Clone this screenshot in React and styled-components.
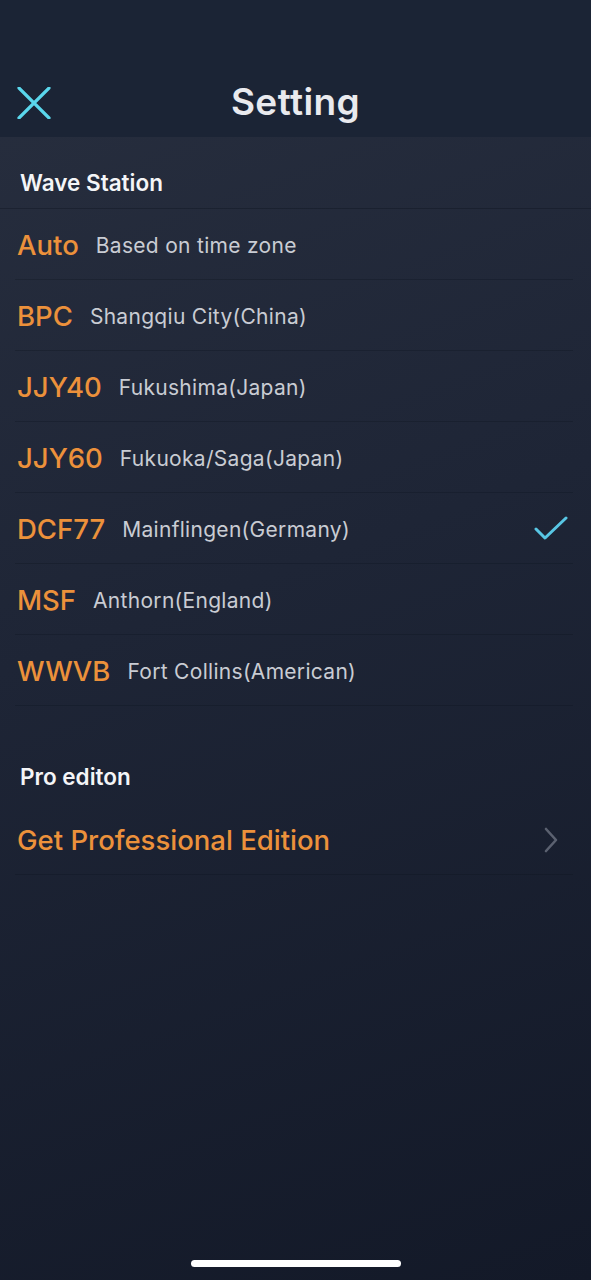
import React from 'react';
import styled, { createGlobalStyle } from 'styled-components';

const GlobalStyle = createGlobalStyle`
    html, body {
        margin: 0;
        padding: 0;
        background: #161c2b;
    }
    body {
        font-family: Inter, "Noto Sans", "Liberation Sans", sans-serif;
        -webkit-font-smoothing: antialiased;
    }
`;

const Screen = styled.div`
    width: 591px;
    height: 1280px;
    display: flex;
    flex-direction: column;
    overflow: hidden;
    background: linear-gradient(160deg, #282f3f 0%, #1e2536 45%, #131928 100%);
`;

const NavBar = styled.header`
    height: 137px;
    flex-shrink: 0;
    background: #1b2435;
    display: grid;
    grid-template-columns: 80px 1fr 80px;
    align-items: end;
    padding-bottom: 13px;
    box-sizing: border-box;
`;

const CloseButton = styled.button`
    background: none;
    border: 0;
    padding: 0 0 5px 17px;
    display: flex;
    cursor: pointer;
`;

const Title = styled.h1`
    margin: 0;
    text-align: center;
    font-size: 37px;
    font-weight: 600;
    color: #e9eaee;
    letter-spacing: 0.4px;
`;

const SectionTitle = styled.div`
    height: ${(p) => p.h}px;
    box-sizing: border-box;
    padding: ${(p) => p.pt}px 0 0 20px;
    font-size: 22.5px;
    font-weight: 600;
    color: #f4f5f7;
    border-bottom: 1px solid ${(p) => (p.line ? 'rgba(12, 18, 30, 0.35)' : 'transparent')};
`;

const List = styled.div`
    display: flex;
    flex-direction: column;
`;

const Row = styled.div`
    height: 71px;
    margin-left: 15px;
    margin-right: 18px;
    box-sizing: border-box;
    display: flex;
    align-items: center;
    gap: 17px;
    border-bottom: 1px solid rgba(12, 18, 30, 0.28);
    padding: 2px 0 0 2px;
`;

const Code = styled.span`
    font-size: 27.5px;
    font-weight: 500;
    color: #ec913b;
`;

const Place = styled.span`
    flex: 1;
    font-size: 21px;
    font-weight: 400;
    color: #c9ccd3;
    letter-spacing: 0.3px;
`;

const Trail = styled.span`
    display: flex;
    align-items: center;
    margin-right: ${(p) => p.mr}px;
`;

const HomeBar = styled.div`
    margin: auto auto 13px;
    width: 210px;
    height: 7px;
    border-radius: 4px;
    background: #ffffff;
`;

const stations = [
    { code: 'Auto', place: 'Based on time zone' },
    { code: 'BPC', place: 'Shangqiu City(China)' },
    { code: 'JJY40', place: 'Fukushima(Japan)' },
    { code: 'JJY60', place: 'Fukuoka/Saga(Japan)' },
    { code: 'DCF77', place: 'Mainflingen(Germany)', selected: true },
    { code: 'MSF', place: 'Anthorn(England)' },
    { code: 'WWVB', place: 'Fort Collins(American)' },
];

const CloseIcon = () => (
    <svg width="34" height="32" viewBox="0 0 34 32">
        <path d="M2 1 L32 31 M32 1 L2 31" stroke="#5ad7ec" strokeWidth="3.2" strokeLinecap="round" />
    </svg>
);

const CheckIcon = () => (
    <svg width="34" height="26" viewBox="0 0 34 26">
        <path d="M2 13 L11 22 L32 2" stroke="#58c6e4" strokeWidth="3" fill="none" strokeLinecap="round" strokeLinejoin="round" />
    </svg>
);

const ChevronIcon = () => (
    <svg width="16" height="26" viewBox="0 0 16 26">
        <path d="M3 2 L13 13 L3 24" stroke="#5b6170" strokeWidth="2.6" fill="none" strokeLinecap="round" strokeLinejoin="round" />
    </svg>
);

const App = () => {
    return (
        <Screen>
            <GlobalStyle />
            <NavBar>
                <CloseButton aria-label="close">
                    <CloseIcon />
                </CloseButton>
                <Title>Setting</Title>
                <div />
            </NavBar>
            <SectionTitle h={72} pt={32} line>
                Wave Station
            </SectionTitle>
            <List>
                {stations.map((s) => (
                    <Row key={s.code}>
                        <Code>{s.code}</Code>
                        <Place>{s.place}</Place>
                        {s.selected && (
                            <Trail mr={5}>
                                <CheckIcon />
                            </Trail>
                        )}
                    </Row>
                ))}
            </List>
            <SectionTitle h={98} pt={57}>
                Pro editon
            </SectionTitle>
            <List>
                <Row>
                    <Code>Get Professional Edition</Code>
                    <Place />
                    <Trail mr={14}>
                        <ChevronIcon />
                    </Trail>
                </Row>
            </List>
            <HomeBar />
        </Screen>
    );
};

export default App;
